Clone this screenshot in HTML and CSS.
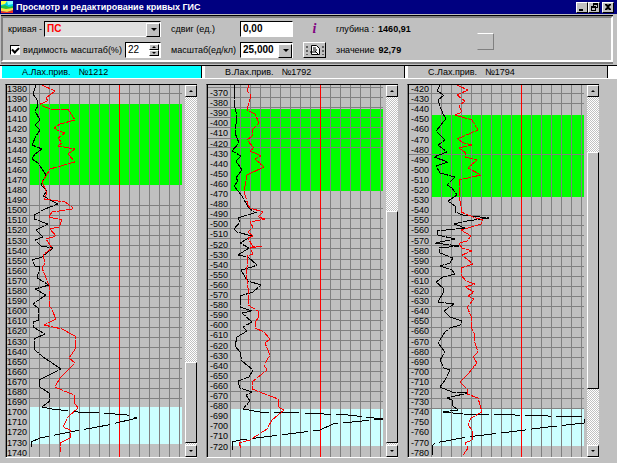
FILE: index.html
```html
<!DOCTYPE html>
<html lang="ru">
<head>
    <meta charset="UTF-8">
    <meta name="viewport" content="width=device-width, initial-scale=1.0">
    <title>Просмотр и редактирование кривых ГИС</title>
    <link rel="stylesheet" href="styles.css">
</head>
<body>
    <header class="titlebar">
        <svg class="app-icon" viewBox="0 0 12 12">
            <rect width="12" height="12" fill="#00c8e0"/>
            <path d="M0 0h6l-2 3-4 1z" fill="#ffff40"/>
            <path d="M6 0h6v3l-5 1z" fill="#80ffff"/>
            <path d="M0 5l4-1 4 2 4-1v3l-5 1-7-2z" fill="#20c040"/>
            <path d="M0 7l5 1 7-1v2l-6 2-6-1z" fill="#ffe040"/>
            <path d="M0 10l6 1 6-2v3H0z" fill="#f03020"/>
        </svg>
        <h1>Просмотр и редактирование кривых ГИС</h1>
        <div class="window-buttons">
            <button aria-label="Свернуть"><svg viewBox="0 0 10 8"><path d="M2 6h4v2H2z"/></svg></button>
            <button aria-label="Восстановить"><svg viewBox="0 0 10 8"><path d="M4 0h5v5H7V4h1V2H5v1H4zM2 3h5v5H2zM3 5v2h3V5z" fill-rule="evenodd"/></svg></button>
            <button class="close" aria-label="Закрыть"><svg viewBox="0 0 10 8"><path d="M2 1h2l1 1 1-1h2v1L6 4l2 2v1H6L5 6 4 7H2V6l2-2-2-2z"/></svg></button>
        </div>
    </header>

    <form class="toolbar">
        <div class="group curve">
            <div class="row">
                <label for="curve">кривая -</label>
                <span class="select wide">
                    <select id="curve"><option>ПС</option></select>
                </span>
            </div>
            <div class="row">
                <input type="checkbox" id="visible" checked>
                <label for="visible">видимость</label>
                <label for="percent">масштаб(%)</label>
                <span class="spinner">
                    <input type="text" id="percent" value="22">
                    <span class="arrows">
                        <button type="button" class="up" aria-label="Больше"></button>
                        <button type="button" class="down" aria-label="Меньше"></button>
                    </span>
                </span>
            </div>
        </div>
        <div class="group scale">
            <div class="row">
                <label for="shift">сдвиг (ед.)</label>
                <input type="text" id="shift" value="0,00">
            </div>
            <div class="row">
                <label for="scale">масштаб(ед/кл)</label>
                <span class="select">
                    <select id="scale"><option>25,000</option></select>
                </span>
            </div>
        </div>
        <div class="group tools">
            <div class="row"><span class="info">i</span></div>
            <div class="row">
                <button type="button" class="tool" aria-label="Печать">
                    <svg viewBox="0 0 20 12">
                        <path d="M2 2v2M2 6v2M2 10v1M18 2v2M18 6v2M18 10v1" stroke="#000"/>
                        <path d="M6.500 1.500h5l3 3v6h-8z" fill="#fff" stroke="#000"/>
                        <path d="M8 4h3M8 6h4M5 8h6M10 7l4 4" stroke="#000" fill="none"/>
                    </svg>
                </button>
            </div>
        </div>
        <div class="group readout">
            <div class="row"><span>глубина :</span><output>1460,91</output></div>
            <div class="row"><span>значение</span><output>92,79</output></div>
        </div>
        <div class="swatch"></div>
    </form>

    <nav class="wells">
        <button class="active"><span>А.Лах.прив.</span><span>№1212</span></button>
        <button><span>В.Лах.прив.</span><span>№1792</span></button>
        <button><span>С.Лах.прив.</span><span>№1794</span></button>
    </nav>

    <main class="panels" id="panels"></main>

    <script src="logs.js"></script>
</body>
</html>
```
FILE: styles.css
```css
* {
    box-sizing: border-box;
}
body {
    margin: 0;
    background-color: #c0c0c0;
    color: #000;
    font-family: "Liberation Sans", Arial, sans-serif;
    font-size: 9px;
    line-height: 12px;
}
button, input, select {
    font: inherit;
    color: inherit;
    margin: 0;
    padding: 0;
    border-radius: 0;
}
button {
    background-color: #c0c0c0;
    border: 1px solid;
    border-color: #fff #000 #000 #fff;
}
.titlebar {
    display: flex;
    align-items: center;
    gap: 3px;
    height: 14px;
    padding: 0 3px 0 1px;
    background-color: #000080;
    color: #fff;
}
.app-icon {
    width: 12px;
    height: 12px;
}
.titlebar h1 {
    flex: 1;
    margin: 0;
    font-size: 9px;
    font-weight: bold;
    white-space: nowrap;
}
.window-buttons {
    display: flex;
}
.window-buttons button {
    display: flex;
    width: 12px;
    height: 11px;
    color: #000;
}
.window-buttons svg {
    width: 10px;
    height: 8px;
}
.window-buttons .close {
    margin-left: 2px;
}

/* toolbar */
.toolbar {
    display: flex;
    align-items: center;
    gap: 10px;
    height: 46px;
    margin: 2px 4px 0 1px;
    padding: 0 0 0 5px;
    border: 2px solid;
    border-color: #808080 #fff #fff #808080;
    box-shadow: 0 -1px #000, 0 2px #808080;
}
.group {
    display: flex;
    flex-direction: column;
    gap: 5px;
}
.row {
    display: flex;
    align-items: center;
    height: 16px;
    white-space: nowrap;
}
.curve {
    width: 153px;
}
.curve .row {
    justify-content: space-between;
}
.scale {
    width: 122px;
}
.scale .row {
    justify-content: space-between;
}
.tools {
    width: 23px;
}
.tools .row {
    justify-content: center;
}
input[type="text"], select {
    height: 16px;
    padding: 0 2px;
    border: 1px solid;
    border-color: #000 #fff #fff #000;
    outline: none;
    background-color: #fff;
    font-size: 10px;
}
#shift {
    width: 53px;
    font-weight: bold;
}
.select {
    position: relative;
    display: block;
    width: 53px;
}
.select select {
    appearance: none;
    display: block;
    width: 100%;
    font-weight: bold;
    font-size: 10px;
}
.select.wide {
    width: 117px;
}
.select.wide select {
    background-color: #e0e0e0;
    color: #f00;
}
.select::before {
    content: "";
    position: absolute;
    top: 2px;
    right: 1px;
    width: 12px;
    height: 12px;
    background-color: #c0c0c0;
    border: 1px solid;
    border-color: #fff #000 #000 #fff;
    pointer-events: none;
}
.select::after {
    content: "";
    position: absolute;
    top: 7px;
    right: 4px;
    border: 3px solid transparent;
    border-top-color: #000;
    border-bottom: 0;
    pointer-events: none;
}
input[type="checkbox"] {
    appearance: none;
    width: 10px;
    height: 10px;
    margin-left: 2px;
    background-color: #fff;
    border: 1px solid;
    border-color: #000 #fff #fff #000;
}
input[type="checkbox"]:checked::before {
    content: "";
    display: block;
    width: 3px;
    height: 5px;
    margin: 0 auto;
    border: solid #000;
    border-width: 0 2px 2px 0;
    transform: rotate(45deg);
}
.spinner {
    display: flex;
    width: 36px;
    height: 16px;
    background-color: #fff;
    border: 1px solid;
    border-color: #000 #fff #fff #000;
}
.spinner input[type="text"] {
    width: 22px;
    height: 14px;
    border: 0;
}
.arrows {
    display: flex;
    flex-direction: column;
    flex: 1;
    padding: 1px;
}
.arrows button {
    display: flex;
    align-items: center;
    justify-content: center;
    flex: 1;
    min-height: 0;
}
.up::before, .down::before {
    content: "";
    border: 2px solid transparent;
}
.up::before {
    border-bottom-color: #000;
    border-top: 0;
}
.down::before {
    border-top-color: #000;
    border-bottom: 0;
}
.info {
    color: #800080;
    font-family: "Liberation Serif", serif;
    font-size: 14px;
    font-style: italic;
    font-weight: bold;
}
.tool {
    display: flex;
    align-items: center;
    justify-content: center;
    width: 23px;
    height: 16px;
    border-color: #fff #000 #000 #fff;
}
.tool svg {
    width: 20px;
    height: 12px;
}
.readout {
    width: 131px;
}
.readout .row {
    gap: 4px;
}
.readout output {
    font-weight: bold;
}
.swatch {
    width: 17px;
    height: 17px;
    margin-top: 4px;
    border: 1px solid;
    border-color: #fff #808080 #808080 #c0c0c0;
}

/* well tabs */
.wells {
    display: grid;
    grid-template-columns: 1fr 1fr 1fr;
    gap: 3px;
    height: 13px;
    margin-top: 3px;
    padding: 0 9px 0 2px;
    background-color: #fff;
    border-top: 1px solid #000;
}
.wells button {
    display: flex;
    align-items: center;
    gap: 8px;
    padding: 0 0 0 20px;
    border: 0;
    border-right: 1px solid #000;
    line-height: 11px;
    white-space: nowrap;
}
.wells .active {
    background-color: #0ff;
}

/* log panels */
.panels {
    display: grid;
    grid-template-columns: 1fr 1fr 1fr;
    gap: 9px;
    padding: 5px 18px 5px 5px;
    border-top: 1px solid #fff;
}
.panel {
    display: flex;
    align-items: stretch;
    border-left: 1px solid #808080;
    border-top: 1px solid #000;
    border-bottom: 1px solid #fff;
}
.chart {
    flex: 1;
    min-width: 0;
    border-left: 1px solid #000;
}
.chart svg {
    display: block;
    width: 100%;
}
.chart text {
    font-size: 9px;
}
.grid {
    fill: #808080;
}
.marker {
    fill: #f00;
}
.green {
    fill: #0f0;
}
.cyan {
    fill: #cff;
}
.line {
    fill: none;
    shape-rendering: crispEdges;
}
.black {
    stroke: #000;
    stroke-dasharray: 14 1;
}
.dashed {
    stroke: #000;
    stroke-dasharray: 26 5;
}
.red {
    stroke: #f00;
    stroke-dasharray: 9 1;
}
.scrollbar {
    display: flex;
    flex-direction: column;
    width: 12px;
}
.scrollbar button {
    display: flex;
    align-items: center;
    justify-content: center;
    width: 12px;
    height: 12px;
}
.track {
    display: grid;
    flex: 1;
    background: repeating-conic-gradient(#fff 0 25%, #c0c0c0 0 50%) 0 0 / 2px 2px;
}
.thumb {
    grid-row: 2;
    background-color: #c0c0c0;
    border: 1px solid;
    border-color: #fff #000 #000 #fff;
}
```
FILE: logs.js
```js
const TOP = 85;
const WIDTH = 178;
const HEIGHT = 372;
const STEP = 10.1;

const logs = [
    {
        left: 7,
        first: 1380, count: 37, firstY: 89, noDash: true,
        green: [104, 185], cyan: [407, 444],
        rows: [93, 205, 215, 225, 235, 245, 256, 266, 276, 286, 296, 307, 317, 327, 337, 347, 358, 368, 378, 388, 398],
        thumb: [362, 443],
        black: '36,85 33,94 37,100 38,106 35,111 40,120 35,125 40,130 36,136 32,145 37,147 42,149 35,154 32,159 38,163 46,175 41,185 47,191 43,196 58,204 50,207 45,209 34,215 34,219 48,224 42,227 36,230 43,237 35,240 41,246 53,248 42,257 32,260 35,266 40,267 37,278 49,285 35,289 46,295 33,304 38,308 39,320 33,322 33,327 45,334 34,339 35,350 43,357 61,369 39,380 40,387 49,393 50,401 42,407',
        dashed: '42,407 52,409 78,412 92,412 127,415 137,418 108,425 70,432 40,438 31,442 31,447',
        red: '42,85 55,91 46,98 48,101 40,104 43,106 50,109 68,109 75,120 60,124 54,128 59,131 65,133 58,138 62,143 58,146 75,149 68,154 75,162 50,169 46,176 42,182 47,193 44,199 65,202 72,207 72,209 52,212 49,217 62,220 59,227 50,229 56,236 46,239 52,248 43,255 45,263 42,268 49,285 49,305 52,310 56,319 44,325 62,329 75,336 76,348 69,358 75,363 60,378 55,387 74,395 74,402 78,408 68,417 63,427 70,430 70,438 60,443 60,452'
    },
    {
        left: 208,
        first: 370, count: 36, firstY: 93,
        green: [109, 191], cyan: [409, 446],
        rows: [87, 97, 107, 117, 127, 138, 147, 208, 218, 228, 238, 248, 259, 269, 279, 289, 299, 310, 320, 330, 340, 350, 361, 371, 381, 391, 401],
        thumb: [211, 443],
        black: '234,85 234,93 235,108 237,116 235,133 239,143 232,151 241,156 236,161 242,170 236,178 238,181 234,186 242,196 248,207 255,213 257,212 238,218 240,222 234,229 237,232 252,236 240,243 249,248 238,255 248,257 257,265 252,267 241,270 245,277 248,281 261,285 253,292 240,296 240,307 252,311 242,313 252,322 243,327 247,331 237,337 235,346 240,352 242,361 253,370 249,377 238,381 240,388 252,392 246,395 250,401 243,409',
        dashed: '243,409 260,412 275,412 348,415 383,419 362,421 333,424 320,430 272,436 240,440 232,442 232,447 233,450',
        red: '249,85 247,91 251,95 247,110 255,114 259,123 252,130 252,136 247,140 254,148 250,151 261,156 255,159 264,167 247,175 244,191 248,205 250,208 263,212 258,217 265,219 250,222 253,227 248,232 253,236 248,238 253,247 262,246 250,248 253,254 247,256 248,263 246,272 248,288 249,297 248,305 258,311 259,317 255,322 255,328 264,332 270,339 265,343 270,355 264,365 267,370 252,382 252,389 278,399 278,407 284,410 272,420 267,429 250,440 239,443 241,448'
    },
    {
        left: 409,
        first: 420, count: 37, firstY: 89,
        green: [115, 197], cyan: [409, 446],
        rows: [93, 103, 154, 215, 225, 235, 245, 256, 266, 276, 286, 296, 306, 317, 327, 337, 347, 357, 368, 378, 388, 398, 408],
        thumb: [152, 389],
        black: '440,85 437,91 444,95 438,100 440,106 443,114 446,118 441,125 436,131 445,140 438,145 447,152 434,157 448,162 436,166 440,173 455,177 447,185 452,188 457,195 448,201 455,206 455,212 463,215 489,218 467,221 454,224 465,228 437,231 438,235 455,239 435,243 459,246 439,248 440,253 453,258 450,263 440,266 452,270 455,274 443,277 436,282 443,288 443,293 438,302 454,304 444,311 450,317 462,321 460,325 450,328 445,332 438,343 445,352 440,360 444,368 450,370 445,380 440,387 452,392 468,393 447,398 452,400 453,406 458,410 443,412 463,414',
        dashed: '463,414 515,415 548,416 584,416 584,423 548,427 517,431 467,437 435,443 432,446 432,455',
        red: '457,85 468,90 457,95 465,101 459,106 462,112 455,115 472,120 478,130 457,139 464,143 472,145 459,148 466,153 465,157 477,160 468,168 481,175 459,180 459,195 461,207 461,212 473,217 483,220 481,224 461,230 471,236 467,241 459,243 462,248 472,251 462,255 473,264 461,268 461,275 466,281 475,284 465,287 474,292 468,296 474,299 467,307 472,318 471,327 474,333 474,340 478,352 473,357 477,363 468,374 460,382 468,390 467,394 478,398 482,412 471,418 468,425 472,430 472,440 465,443 468,448 463,455'
    }
];

function drawChart(log) {
    const x0 = log.left + 23;
    const x1 = log.left + 175;
    let svg = `<svg viewBox="${log.left} ${TOP} ${WIDTH} ${HEIGHT}">`;

    // marked intervals
    svg += `<rect class="green" x="${x0}" y="${log.green[0]}" width="152" height="${log.green[1] - log.green[0]}"/>`;
    svg += `<rect class="cyan" x="${x0}" y="${log.cyan[0]}" width="152" height="${log.cyan[1] - log.cyan[0]}"/>`;

    // grid
    for (let x = x0 - 1; x < x1; x += 10) {
        svg += `<rect class="grid" x="${x}" y="${TOP}" width="1" height="${HEIGHT}"/>`;
    }
    log.rows.forEach(y => {
        svg += `<rect class="grid" x="${log.left}" y="${y}" width="175" height="1"/>`;
    });
    svg += `<rect class="marker" x="${log.left + 112}" y="${TOP}" width="1" height="${HEIGHT}"/>`;

    // depth labels
    for (let i = 0; i < log.count; i++) {
        const depth = log.first + i * 10;
        const y = Math.round(log.firstY + i * STEP) + 3;
        const label = log.noDash ? depth : '-' + depth;
        svg += `<text x="${log.left + 20}" y="${y}" text-anchor="end">${label}</text>`;
    }

    // curves
    svg += `<polyline class="line black" points="${log.black}"/>`;
    svg += `<polyline class="line dashed" points="${log.dashed}"/>`;
    svg += `<polyline class="line red" points="${log.red}"/>`;
    return `<div class="chart">${svg}</svg></div>`;
}

function drawScrollbar(log) {
    const start = log.thumb[0] - 97;
    const size = log.thumb[1] - log.thumb[0];
    const rest = 445 - log.thumb[1];
    return `<div class="scrollbar">
        <button class="up" aria-label="Вверх"></button>
        <div class="track" style="grid-template-rows: ${start}fr ${size}fr ${rest}fr"><div class="thumb"></div></div>
        <button class="down" aria-label="Вниз"></button>
    </div>`;
}

document.getElementById('panels').innerHTML = logs
    .map(log => `<section class="panel">${drawChart(log)}${drawScrollbar(log)}</section>`)
    .join('');
```
